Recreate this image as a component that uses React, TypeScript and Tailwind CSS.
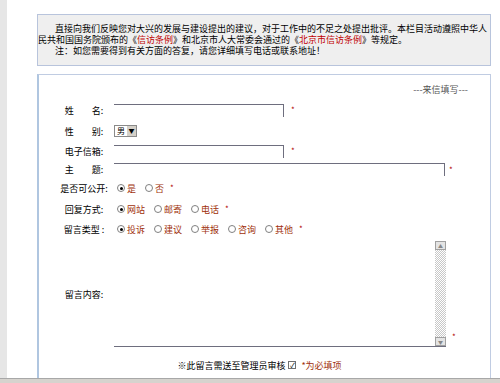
import React from "react";

const Radio = ({ checked }: { checked?: boolean }) => (
  <span className="flex h-[8px] w-[8px] shrink-0 items-center justify-center rounded-full border border-[#808080] bg-white">
    {checked && <span className="h-[3px] w-[3px] rounded-full bg-black" />}
  </span>
);

const Star = ({ className = "" }: { className?: string }) => (
  <span className={`text-[8px] leading-none text-[#b00000] ${className}`}>*</span>
);

const RadioGroup = ({ options }: { options: string[] }) => (
  <div className="ml-[3px] flex items-center">
    {options.map((o, i) => (
      <span key={o} className="mr-[9px] flex items-center gap-[2px]">
        <Radio checked={i === 0} />
        <span className="text-[#a0300a]">{o}</span>
      </span>
    ))}
    <Star className="-ml-[3px]" />
  </div>
);

const TextInput = ({ wide }: { wide?: boolean }) => (
  <div className="flex items-center">
    <div
      className={`h-[13px] border-t border-r border-[#6e6e7e] bg-white ${
        wide ? "w-[331px]" : "w-[170px]"
      }`}
    />
    <Star className={wide ? "ml-[4px]" : "ml-[7px]"} />
  </div>
);

const Label = ({ children }: { children: React.ReactNode }) => (
  <div className="w-[56px] shrink-0 whitespace-nowrap text-center">{children}</div>
);

const App: React.FC = () => {
  return (
    <div className="flex h-[383px] w-[500px] flex-col overflow-hidden bg-white font-['Noto_Sans_CJK_SC',sans-serif] text-[9px] leading-[11px] text-black">
      <div className="flex min-h-0 flex-1">
        <div className="w-[7px] shrink-0 bg-[#e6e6e6]" />
        <div className="ml-[30px] flex w-[454px] flex-col pt-[14px]">
          {/* notice */}
          <div className="h-[52px] border border-[#b8c4dc] bg-[#efefef] pt-[8px] whitespace-nowrap">
            <div className="h-[11px] pl-[17px]">
              直接向我们反映您对大兴的发展与建设提出的建议，对于工作中的不足之处提出批评。本栏目活动遵照中华人
            </div>
            <div className="h-[11px]">
              民共和国国务院颁布的《<span className="text-[#c00000]">信访条例</span>》和北京市人大常委会通过的《
              <span className="text-[#c00000]">北京市信访条例</span>》等规定。
            </div>
            <div className="h-[11px] pl-[17px]">
              注：如您需要得到有关方面的答复，请您详细填写电话或联系地址！
            </div>
          </div>

          {/* form */}
          <div className="mt-[8px] flex flex-1 flex-col border-t border-r border-l-2 border-[#c0cce2] border-l-[#b0c6e0] pt-[9px]">
            <div className="pr-[22px] text-right text-[#555]">---来信填写---</div>

            <div className="mt-[5px] flex h-[20px] items-center pl-[17px]">
              <Label>姓　　名:</Label>
              <div className="ml-[2px]">
                <TextInput />
              </div>
            </div>

            <div className="mt-[1px] flex h-[20px] items-center pl-[17px]">
              <Label>性　　别:</Label>
              <div className="ml-[2px] flex h-[12px] w-[23px] items-center border border-[#8a8a8a] bg-white">
                <span className="flex-1 pl-[2px] text-[8px] leading-none">男</span>
                <span className="flex h-full w-[9px] items-center justify-center bg-[#d4d0c8] text-[6px] leading-none">
                  ▼
                </span>
              </div>
            </div>

            <div className="flex h-[20px] items-center pl-[17px]">
              <Label>电子信箱:</Label>
              <div className="ml-[2px]">
                <TextInput />
              </div>
            </div>

            <div className="flex h-[17px] items-center pl-[17px]">
              <Label>主　　题:</Label>
              <div className="ml-[2px]">
                <TextInput wide />
              </div>
            </div>

            <div className="flex h-[20px] items-center pl-[17px]">
              <Label>是否可公开:</Label>
              <div className="ml-[2px]">
                <RadioGroup options={["是", "否"]} />
              </div>
            </div>

            <div className="mt-[1px] flex h-[20px] items-center pl-[17px]">
              <Label>回复方式:</Label>
              <div className="ml-[2px]">
                <RadioGroup options={["网站", "邮寄", "电话"]} />
              </div>
            </div>

            <div className="flex h-[20px] items-center pl-[17px]">
              <Label>留言类型 :</Label>
              <div className="ml-[2px]">
                <RadioGroup options={["投诉", "建议", "举报", "咨询", "其他"]} />
              </div>
            </div>

            <div className="mt-[2px] flex h-[106px] items-center pl-[17px]">
              <Label>留言内容:</Label>
              <div className="ml-[2px] flex h-full items-end">
                <div className="flex h-full w-[332px] border-b border-[#6e6e7e] bg-white">
                  <div className="flex-1" />
                  <div className="flex w-[11px] flex-col bg-[repeating-conic-gradient(#c8c8c8_0_25%,#ffffff_0_50%)] bg-[length:2px_2px]">
                    <div className="flex h-[9px] items-center justify-center border border-[#a0a0a0] bg-[#e4e4e4] text-[5px] leading-none text-[#888]">
                      ▲
                    </div>
                    <div className="flex-1" />
                    <div className="flex h-[9px] items-center justify-center border border-[#a0a0a0] bg-[#e4e4e4] text-[5px] leading-none text-[#888]">
                      ▼
                    </div>
                  </div>
                </div>
                <Star className="mb-[6px] ml-[6px]" />
              </div>
            </div>

            <div className="mt-[8px] flex h-[20px] items-center justify-center pr-[10px]">
              <span>※此留言需送至管理员审核</span>
              <span className="ml-[3px] flex h-[8px] w-[8px] items-center justify-center border border-[#707070] bg-white text-[7px] leading-none">
                ✓
              </span>
              <span className="ml-[5px] text-[#a0300a]">*为必填项</span>
            </div>
          </div>
        </div>
      </div>
      <div className="h-[5px] shrink-0 border-t border-[#a8a8a8] bg-[#d6d3ce]" />
    </div>
  );
};

export default App;
